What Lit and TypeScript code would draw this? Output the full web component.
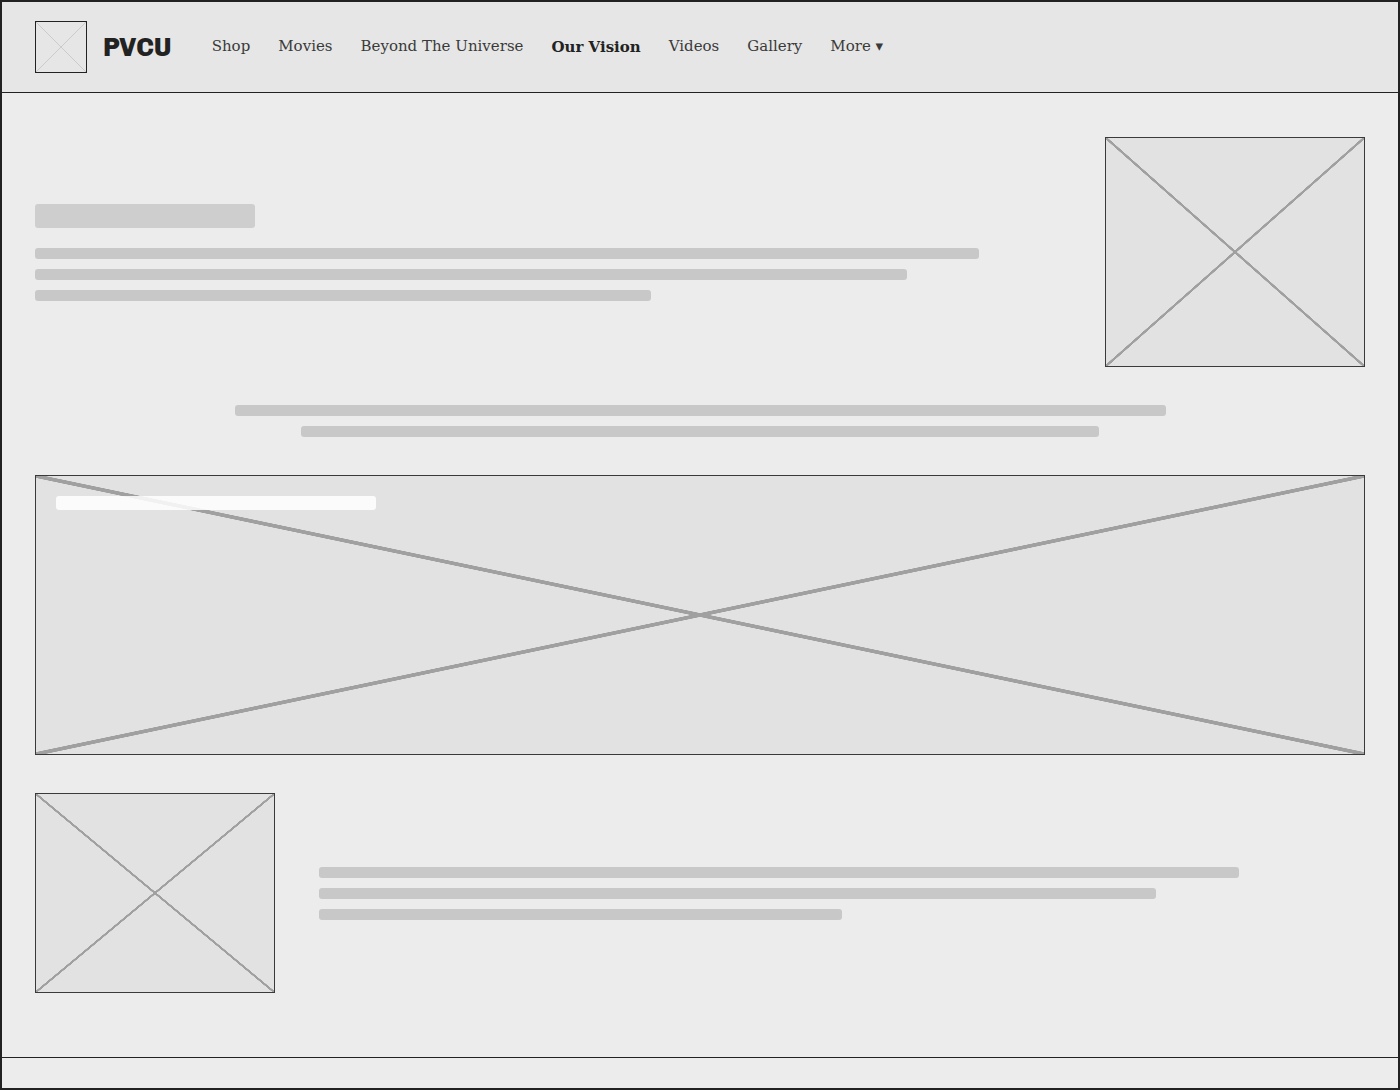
import { LitElement, html, css } from "lit";
import { customElement, property } from "lit/decorators.js";
import { classMap } from "lit/directives/class-map.js";

@customElement("text-lines")
class TextLines extends LitElement {
  @property({ attribute: false }) widths: number[] = [];

  static styles = css`
    :host {
      display: flex;
      flex-direction: column;
      gap: 10px;
      align-items: var(--line-align, flex-start);
    }
    .line {
      height: 11px;
      border-radius: 3px;
      background: #c8c8c8;
    }
  `;

  render() {
    return this.widths.map(
      (w) => html`<div class="line" style="width:${w}%"></div>`
    );
  }
}

@customElement("app-root")
class AppRoot extends LitElement {
  private links = [
    "Shop",
    "Movies",
    "Beyond The Universe",
    "Our Vision",
    "Videos",
    "Gallery",
    "More ▾",
  ];

  static styles = css`
    :host {
      display: block;
    }
    * {
      box-sizing: border-box;
    }
    .page {
      min-height: 100vh;
      display: flex;
      flex-direction: column;
      border: 2px solid #222;
      background: #ececec;
      color: #222;
      font-family: "DejaVu Serif", serif;
      font-size: 15px;
    }
    header {
      display: flex;
      align-items: center;
      gap: 40px;
      padding: 19px 33px;
      background: #e6e6e6;
      border-bottom: 1px solid #222;
    }
    .brand {
      display: flex;
      align-items: center;
      gap: 16px;
      color: #222;
      text-decoration: none;
      font-family: Chivo, Roboto, sans-serif;
      font-size: 26px;
      font-weight: 800;
    }
    nav {
      display: flex;
      flex-wrap: wrap;
      align-items: center;
      gap: 28px;
    }
    nav a {
      color: #3a3a3a;
      text-decoration: none;
      line-height: 20px;
      padding-bottom: 2px;
    }
    nav a.active {
      color: #222;
      font-weight: 700;
      padding-bottom: 0;
    }
    .picture {
      flex: none;
      border: 1px solid #3a3a3a;
      background:
        linear-gradient(to top right, transparent 49.6%, #a0a0a0 49.7%, #a0a0a0 50.3%, transparent 50.4%),
        linear-gradient(to bottom right, transparent 49.6%, #a0a0a0 49.7%, #a0a0a0 50.3%, transparent 50.4%),
        #e2e2e2;
    }
    .logo {
      flex: none;
      width: 52px;
      height: 52px;
      border: 1px solid #222;
    }
    .logo svg {
      display: block;
      width: 100%;
      height: 100%;
    }
    main {
      flex: 1;
      display: flex;
      flex-direction: column;
      gap: 38px;
      padding: 44px 33px 64px;
    }
    .row {
      display: flex;
      align-items: center;
      gap: 44px;
    }
    .copy {
      flex: 1;
      display: flex;
      flex-direction: column;
      gap: 20px;
    }
    .heading {
      width: 220px;
      height: 24px;
      border-radius: 3px;
      background: #cecece;
    }
    .portrait {
      width: 260px;
      height: 230px;
    }
    .thumb {
      width: 240px;
      height: 200px;
    }
    .banner {
      height: 280px;
      padding: 20px;
    }
    .caption {
      width: 320px;
      height: 14px;
      border-radius: 3px;
      background: rgba(255, 255, 255, 0.85);
    }
    .centered {
      --line-align: center;
    }
    footer {
      height: 31px;
      border-top: 1px solid #222;
    }
  `;

  render() {
    return html`
      <div class="page">
        <header>
          <a class="brand" href="#">
            <span class="logo">
              <svg viewBox="0 0 50 50" aria-hidden="true">
                <path d="M0 0L50 50M50 0L0 50" stroke="#c4c4c4" stroke-width="0.8" />
              </svg>
            </span>
            <span>PVCU</span>
          </a>
          <nav>
            ${this.links.map((l) => {
              const active = l === "Our Vision";
              return html`<a href="#" class=${classMap({ active })}>${l}</a>`;
            })}
          </nav>
        </header>
        <main>
          <section class="row">
            <div class="copy">
              <div class="heading"></div>
              <text-lines .widths=${[92, 85, 60]}></text-lines>
            </div>
            <div class="picture portrait"></div>
          </section>
          <text-lines class="centered" .widths=${[70, 60]}></text-lines>
          <section class="picture banner">
            <div class="caption"></div>
          </section>
          <section class="row">
            <div class="picture thumb"></div>
            <div class="copy">
              <text-lines .widths=${[88, 80, 50]}></text-lines>
            </div>
          </section>
        </main>
        <footer></footer>
      </div>
    `;
  }
}
